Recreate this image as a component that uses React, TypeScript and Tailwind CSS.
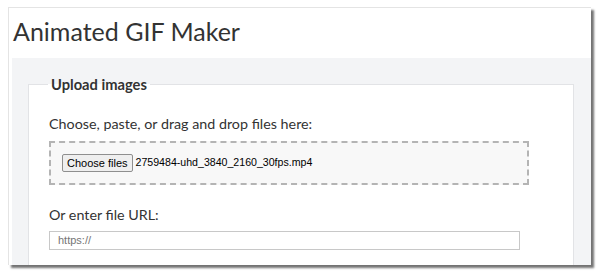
export default function App() {
  return (
    <div className="w-[600px] h-[273px] bg-white overflow-hidden pl-[8px] pt-[7px]">
      <div className="w-[583px] h-[258px] bg-white border-t border-l border-[#e4e4e4] shadow-[3px_3px_2px_rgba(0,0,0,0.55)] overflow-hidden flex flex-col">
        <h1 className="shrink-0 h-[50px] pl-[4px] pt-[7px] text-[25px] leading-[32px] text-[#333] font-['Lato',sans-serif]">
          Animated GIF Maker
        </h1>
        <div className="flex-1 ml-[3px] bg-[#f3f4f6] pt-[16px] pl-[16px] pr-[17px]">
          <fieldset className="bg-white border border-[#e2e3e6] h-[200px] px-[20px] font-['Lato',sans-serif] text-[#333]">
            <legend className="px-[3px] ml-[-1px] text-[14.7px] font-bold leading-[20px]">Upload images</legend>
            <p className="mt-[19px] text-[14.3px] leading-[22px]">Choose, paste, or drag and drop files here:</p>
            <div className="mt-[6px] w-[480px] h-[44px] border-2 border-dashed border-[#b4b4b4] bg-[#f8f8f8] flex items-center pl-[11px] font-['Liberation_Sans',sans-serif] text-[10.6px] text-black">
              <button className="h-[18px] px-[4px] border border-[#8f8f8f] rounded-[2px] bg-[#efefef] text-[11px] leading-none mr-[3px]">
                Choose files
              </button>
              <span>2759484-uhd_3840_2160_30fps.mp4</span>
            </div>
            <p className="mt-[19px] text-[14.3px] leading-[22px]">Or enter file URL:</p>
            <input
              className="mt-[2px] w-[471px] h-[19px] border border-[#c8c8c8] px-[8px] text-[11px] font-['Liberation_Sans',sans-serif] placeholder:text-[#757575]"
              placeholder="https://"
            />
          </fieldset>
        </div>
      </div>
    </div>
  )
}
